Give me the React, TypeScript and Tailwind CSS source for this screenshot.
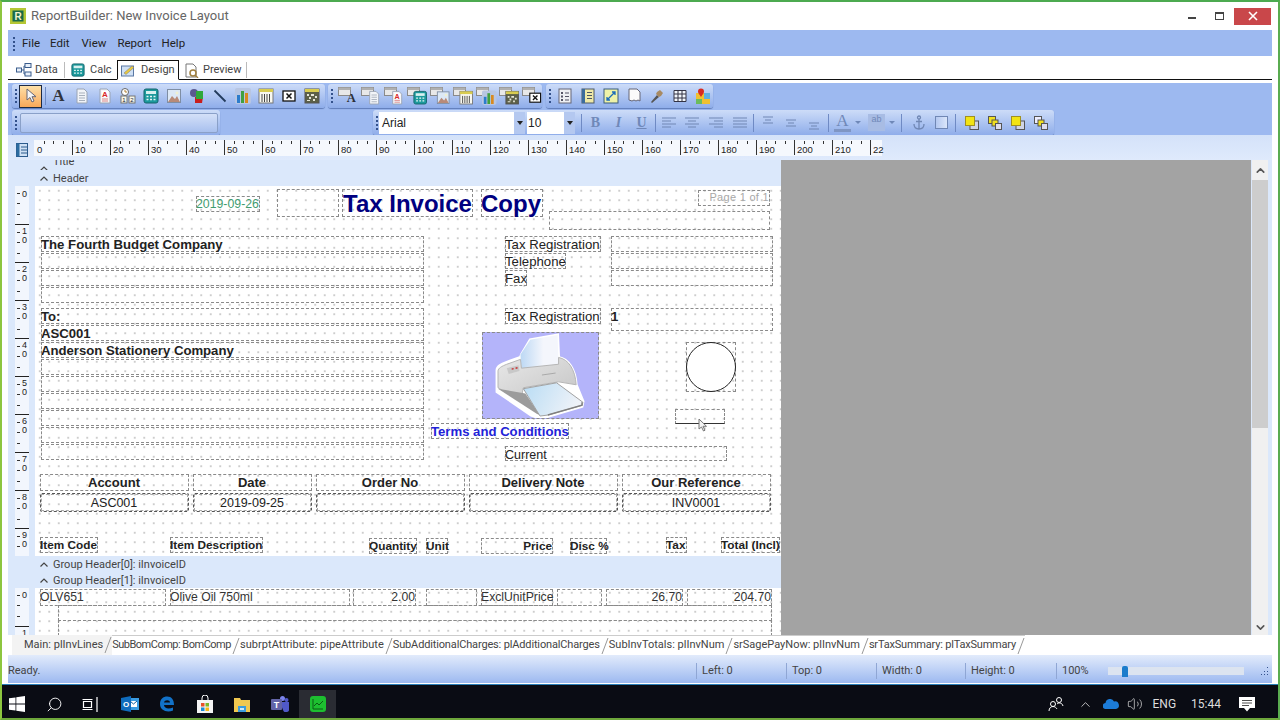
import type { ReactNode } from "react";
import { ChevronDown, ChevronUp, Search, Volume2 } from "lucide-react";

const arrow = "M1.5 5.5 5 2l3.5 3.5";

function Caret() {
  return (
    <svg width="10" height="7" viewBox="0 0 10 7" className="shrink-0">
      <path d={arrow} fill="none" stroke="#444" strokeWidth="1.2" />
    </svg>
  );
}

function Grip({ className = "" }: { className?: string }) {
  return (
    <div className={"flex flex-col gap-[2px] shrink-0 " + className}>
      <span className="w-[2px] h-[2px] bg-[#33518c]" />
      <span className="w-[2px] h-[2px] bg-[#33518c]" />
      <span className="w-[2px] h-[2px] bg-[#33518c]" />
      <span className="w-[2px] h-[2px] bg-[#33518c]" />
    </div>
  );
}

const page = (
  <>
    <path d="M3 1h7l3 3v11H3z" fill="#f2f4f8" stroke="#9aa4b4" />
    <path d="M5 5h6M5 7.500h6M5 10h6M5 12.500h6" stroke="#a8b0bc" />
  </>
);
const pageA = (
  <>
    <path d="M3 1h7l3 3v11H3z" fill="#f6f6f8" stroke="#9aa4b4" />
    <rect x="5" y="3" width="6" height="6" fill="#fff" />
    <text x="8" y="9" fontSize="8" fontWeight="700" textAnchor="middle" fill="#d82828" fontFamily="Liberation Sans">A</text>
    <path d="M5 11h6M5 13h6" stroke="#d88" />
  </>
);
const clock = (
  <>
    <circle cx="5" cy="4" r="3.500" fill="#fff" stroke="#666" />
    <path d="M5 2v2h2" stroke="#b08030" fill="none" />
    <rect x="1" y="8" width="6" height="7" fill="#f6f6e8" stroke="#777" />
    <rect x="9" y="8" width="6" height="7" fill="#f6f6e8" stroke="#777" />
    <text x="4" y="14" fontSize="6" textAnchor="middle" fill="#223" fontFamily="Liberation Sans">1</text>
    <text x="12" y="14" fontSize="6" textAnchor="middle" fill="#223" fontFamily="Liberation Sans">2</text>
  </>
);
const calc = (
  <>
    <rect x="1" y="1" width="14" height="14" rx="2" fill="#1c9a9c" stroke="#14646c" />
    <rect x="3" y="3" width="10" height="3" fill="#d8f0f0" />
    <path d="M3.500 8.500h2M7 8.500h2M10.500 8.500h2M3.500 11.500h2M7 11.500h2M10.500 11.500h2" stroke="#e8f6f6" strokeWidth="1.500" />
  </>
);
const photo = (
  <>
    <rect x="1.500" y="1.500" width="13" height="13" fill="#dce8f6" stroke="#7f8ea4" />
    <path d="M2 14l4-6 3 3 2-3 3 6z" fill="#b88a78" />
    <circle cx="11" cy="5" r="1.500" fill="#f0f0d0" />
  </>
);
const shapes = (
  <>
    <path d="M6 9h8l-1 6H6z" fill="#c81e1e" />
    <circle cx="5" cy="5" r="4" fill="#5a5a90" />
    <path d="M7 3h7v8H7z" fill="#2fa83a" />
  </>
);
const line = <path d="M2.500 2.500l11 11" stroke="#223a5c" strokeWidth="1.800" />;
const chart = (
  <>
    <rect x="0" y="0" width="16" height="16" rx="2" fill="#b8c6e2" />
    <path d="M2 15V7h3v8z" fill="#2c7ccc" />
    <path d="M6 15V3h3v12z" fill="#40a040" />
    <path d="M10 15V5h3v10z" fill="#d88a20" />
  </>
);
const bars = (
  <>
    <rect x="1" y="1" width="14" height="14" fill="#f8f8f0" stroke="#777" />
    <rect x="1" y="1" width="14" height="3" fill="#d8cc50" />
    <path d="M4 6v8M6.500 6v8M9 6v8M11.500 6v8" stroke="#444" />
  </>
);
const xbox = (
  <>
    <rect x="2" y="3" width="12" height="10" fill="#fff" stroke="#111" strokeWidth="1.300" />
    <path d="M5.500 5.500l5 5m0-5l-5 5" stroke="#111" strokeWidth="1.500" />
  </>
);
const qr = (
  <>
    <rect x="1" y="1" width="14" height="14" fill="#5c6048" stroke="#555" />
    <rect x="1" y="1" width="14" height="3" fill="#d8cc50" />
    <path d="M3 6h2v2H3zM7 6h3v2H7zM11 8h2v2h-2zM5 9h2v2H5zM3 12h3v1H3zM9 11h2v2H9z" fill="#e6e6d8" />
  </>
);
const aLetter = (
  <text x="8" y="13" fontSize="14" fontWeight="700" textAnchor="middle" fill="#2c3038" fontFamily="Liberation Serif">A</text>
);
const list = (
  <>
    <rect x="2" y="1" width="12" height="14" fill="#eef0f4" stroke="#667" />
    <path d="M4 4h2v2H4zM4 7.500h2v2H4zM4 11h2v2H4z" fill="#556" />
    <path d="M8 5h4M8 8.500h4M8 12h4" stroke="#556" />
  </>
);
const outline = (
  <>
    <rect x="2" y="1" width="12" height="14" fill="#efe9a8" stroke="#4c5864" />
    <rect x="2" y="1" width="3" height="14" fill="#3c6c9c" />
    <path d="M7 4.500h5M7 7.500h5M7 10.500h5" stroke="#4c5864" />
  </>
);
const fit = (
  <>
    <rect x="1" y="1" width="14" height="14" fill="#eef2a8" stroke="#3a5c7c" />
    <path d="M4 12l8-8M9 4h3v3M4 9v3h3" stroke="#1c6cb8" fill="none" strokeWidth="1.300" />
  </>
);
const torn = (
  <path d="M3 1h8l3 3v9l-2-1-2 1-2-1-2 1-3-1z" fill="#fbfbfb" stroke="#667" />
);
const torch = (
  <>
    <path d="M2 14l6-7 2 2-7 6z" fill="#555" />
    <path d="M8 4l3-2 3 3-2 3-2 1-3-3z" fill="#a88a62" />
  </>
);
const grid = (
  <path d="M2 2.500h12v11H2zM6 2.500v11M10 2.500v11M2 6h12M2 10h12" fill="#f2f6fc" stroke="#334" />
);
const pin = (
  <>
    <rect x="1" y="5" width="14" height="11" fill="#f0c030" />
    <path d="M9 5h6v6H9z" fill="#60b0e0" />
    <path d="M1 11h6v5H1z" fill="#6cbc5c" />
    <path d="M6 9C4 6 3 5 3 3.500a3 3 0 016 0C9 5 8 6 6 9z" fill="#d82a20" />
  </>
);

function Ico({ children, size = 16 }: { children: ReactNode; size?: number }) {
  return (
    <svg width={size} height={size} viewBox="0 0 16 16">
      {children}
    </svg>
  );
}

function Stacked({ children }: { children: ReactNode }) {
  return (
    <svg width="21" height="18" viewBox="0 0 21 18">
      <rect x="0.500" y="0.500" width="12" height="8" fill="#e8e8e8" stroke="#8a8a8a" />
      <rect x="0.500" y="0.500" width="12" height="2.500" fill="#b0b0b0" />
      <g transform="translate(6 3.500) scale(0.9)">{children}</g>
    </svg>
  );
}

function Slot({ children, className = "" }: { children?: ReactNode; className?: string }) {
  return <div className={"w-[23px] h-[22px] flex items-center justify-center shrink-0 " + className}>{children}</div>;
}

function Bar({ children, className = "" }: { children: ReactNode; className?: string }) {
  return (
    <div className={"h-full flex items-center rounded-[3px] shadow-[0_1px_1px_#5f7cb8] bg-gradient-to-b from-[#cddcf8] to-[#8fadea] " + className}>
      {children}
    </div>
  );
}

function Sep({ className = "mx-[3px]" }: { className?: string }) {
  return <span className={"w-px h-[18px] bg-[#6f8ac4] shrink-0 " + className} />;
}

function Align({ rows }: { rows: string }) {
  return (
    <svg width="16" height="16" viewBox="0 0 16 16">
      <path d={rows} stroke="#7087b4" strokeWidth="1" fill="none" />
    </svg>
  );
}

function Layer({ flip, grey }: { flip?: boolean; grey?: boolean }) {
  return (
    <svg width="16" height="16" viewBox="0 0 16 16">
      {flip ? (
        <>
          <rect x="1.500" y="1.500" width="7" height="7" fill={grey ? "#eef" : "#f0e020"} stroke="#555" />
          <rect x="5" y="5" width="6" height="6" fill="#f0e020" stroke="#555" />
          <rect x="8.500" y="8.500" width="6" height="6" fill="#dde" stroke="#555" />
        </>
      ) : (
        <>
          <rect x="6" y="6" width="8.500" height="8.500" fill="#cfd4e6" stroke="#555" />
          <rect x="1.500" y="1.500" width="9" height="9" fill="#f2e414" stroke="#a09020" />
        </>
      )}
    </svg>
  );
}

function Row1() {
  return (
    <div className="h-[24px] flex items-center pl-[4px] gap-[3px]">
      <Bar className="w-[313px] pl-[3px]">
        <Grip className="mr-[2px]" />
        <div className="w-[23px] h-[23px] border border-[#1c2a44] bg-gradient-to-b from-[#fde0a8] to-[#f8a858] flex items-center justify-center shrink-0">
          <svg width="14" height="16" viewBox="0 0 14 16">
            <path d="M3 1v11l3-2.500 2 4.500 2-1-2-4.300h4z" fill="#f6f6f6" stroke="#667" />
          </svg>
        </div>
        <Sep />
        <Slot className="-ml-[2px]">
          <span className="font-['Liberation_Serif'] font-bold text-[17px] text-[#30343c]">A</span>
        </Slot>
        <Slot><Ico>{page}</Ico></Slot>
        <Slot><Ico>{pageA}</Ico></Slot>
        <Slot><Ico>{clock}</Ico></Slot>
        <Slot><Ico>{calc}</Ico></Slot>
        <Slot><Ico>{photo}</Ico></Slot>
        <Slot><Ico>{shapes}</Ico></Slot>
        <Slot><Ico>{line}</Ico></Slot>
        <Slot><Ico>{chart}</Ico></Slot>
        <Slot><Ico>{bars}</Ico></Slot>
        <Slot><Ico>{xbox}</Ico></Slot>
        <Slot><Ico>{qr}</Ico></Slot>
      </Bar>
      <Bar className="w-[214px] pl-[3px]">
        <Grip className="mr-[4px]" />
        <Slot><Stacked>{aLetter}</Stacked></Slot>
        <Slot><Stacked>{page}</Stacked></Slot>
        <Slot><Stacked>{pageA}</Stacked></Slot>
        <Slot><Stacked>{calc}</Stacked></Slot>
        <Slot><Stacked>{photo}</Stacked></Slot>
        <Slot><Stacked>{bars}</Stacked></Slot>
        <Slot><Stacked>{chart}</Stacked></Slot>
        <Slot><Stacked>{qr}</Stacked></Slot>
        <Slot><Stacked>{xbox}</Stacked></Slot>
      </Bar>
      <Bar className="w-[167px] pl-[3px] ml-[1px]">
        <Grip className="mr-[2px]" />
        <Slot><Ico>{list}</Ico></Slot>
        <Slot><Ico>{outline}</Ico></Slot>
        <Slot><Ico>{fit}</Ico></Slot>
        <Slot><Ico>{torn}</Ico></Slot>
        <Slot><Ico>{torch}</Ico></Slot>
        <Slot><Ico>{grid}</Ico></Slot>
        <Slot><Ico>{pin}</Ico></Slot>
      </Bar>
    </div>
  );
}

function Row2() {
  return (
    <div className="h-[25px] mt-[2px] flex items-center pl-[4px]">
      <Bar className="w-[208px] pl-[3px]">
        <Grip className="mr-[3px]" />
        <div className="w-[198px] h-[20px] border border-[#8aa0c8] rounded-[2px] bg-gradient-to-b from-[#d4e0f8] to-[#a8c0ee]" />
      </Bar>
      <Bar className="w-[681px] ml-[153px] pl-[3px]">
        <Grip className="mr-[1px]" />
        <div className="w-[146px] h-[22px] bg-white flex items-center pl-[3px] shrink-0">
          <span className="font-['Liberation_Sans'] text-[12px] text-[#222]">Arial</span>
          <span className="ml-auto w-[11px] h-[22px] bg-[#b4c8f0] flex items-center justify-center">
            <span className="border-x-[3px] border-x-transparent border-t-[4px] border-t-[#222]" />
          </span>
        </div>
        <div className="w-[48px] h-[22px] bg-white flex items-center pl-[1px] ml-[2px] shrink-0">
          <span className="font-['Liberation_Sans'] text-[12px] text-[#222]">10</span>
          <span className="ml-auto w-[11px] h-[22px] bg-[#b4c8f0] flex items-center justify-center">
            <span className="border-x-[3px] border-x-transparent border-t-[4px] border-t-[#222]" />
          </span>
        </div>
        <Sep className="ml-[6px] mr-[3px]" />
        <Slot className="-ml-[1px]"><span className="font-['Liberation_Serif'] font-bold text-[14px] text-[#6f88b8]">B</span></Slot>
        <Slot><span className="font-['Liberation_Serif'] italic font-bold text-[14px] text-[#6f88b8]">I</span></Slot>
        <Slot><span className="font-['Liberation_Serif'] underline font-bold text-[14px] text-[#6f88b8]">U</span></Slot>
        <Sep className="mx-[2px]" />
        <Slot className="-ml-[1px]"><Align rows="M1 3h14M1 6h9M1 9h14M1 12h9" /></Slot>
        <Slot className="w-[24px]"><Align rows="M1 3h14M4 6h8M1 9h14M4 12h8" /></Slot>
        <Slot className="w-[24px]"><Align rows="M1 3h14M6 6h9M1 9h14M6 12h9" /></Slot>
        <Slot className="w-[21px]"><Align rows="M1 3h14M1 6h14M1 9h14M1 12h14" /></Slot>
        <Sep className="mx-[2px]" />
        <Slot><Align rows="M3 2h10M5 5h6M3 8h10" /></Slot>
        <Slot><Align rows="M3 5h10M5 8h6M3 11h10" /></Slot>
        <Slot><Align rows="M3 8h10M5 11h6M3 14h10" /></Slot>
        <Sep className="ml-[3px] mr-[2px]" />
        <Slot>
          <span className="font-['Liberation_Serif'] text-[17px] leading-[16px] text-[#6f88b8] border-b-[3px] border-[#7f96c4] px-[2px]">A</span>
        </Slot>
        <span className="border-x-[3px] border-x-transparent border-t-[3px] border-t-[#6f88b8] mx-[1px]" />
        <Slot className="ml-[3px]">
          <span className="w-[17px] h-[17px] bg-[#a8bce4] text-[9px] text-[#6f88b8] text-center font-['Liberation_Sans'] leading-[10px]">ab</span>
        </Slot>
        <span className="border-x-[3px] border-x-transparent border-t-[3px] border-t-[#6f88b8] mx-[1px]" />
        <Sep className="ml-[5px] mr-[3px]" />
        <Slot className="ml-[2px]">
          <svg width="14" height="16" viewBox="0 0 14 16" fill="none" stroke="#7087b4" strokeWidth="1.300">
            <circle cx="7" cy="2.500" r="1.500" />
            <path d="M7 4v10M2 9c0 3 2 5 5 5s5-2 5-5M4 6.500h6" />
          </svg>
        </Slot>
        <Slot><span className="w-[13px] h-[13px] border border-[#7087b4] bg-gradient-to-r from-[#b4c8f0] to-[#dbe6fa]" /></Slot>
        <Sep className="mx-[2px]" />
        <Slot className="ml-[2px]"><Layer /></Slot>
        <Slot><Layer flip /></Slot>
        <Slot><Layer /></Slot>
        <Slot><Layer flip grey /></Slot>
      </Bar>
    </div>
  );
}

const hLabels = ["0", "10", "20", "30", "40", "50", "60", "70", "80", "90", "100", "110", "120", "130", "140", "150", "160", "170", "180", "190", "200", "210", "22"];

function HRuler() {
  return (
    <div className="h-[25px] flex items-start bg-gradient-to-b from-[#d4e2f9] to-[#dfeafc] shrink-0">
      <div className="w-[26px] pl-[8px] pt-[8px] shrink-0">
        <svg width="12" height="14" viewBox="0 0 12 14">
          <rect x="0.500" y="0.500" width="11" height="13" fill="#cfe0f4" stroke="#2c5a8c" />
          <rect x="0.500" y="0.500" width="3" height="13" fill="#2c6ca0" />
          <path d="M5 4h6M5 7h6M5 10h6" stroke="#2c5a8c" />
        </svg>
      </div>
      <div className="flex h-[16px] mt-[5px] bg-[#f5f8fd]">
        {hLabels.map((l, i) => (
          <div key={l} className={"relative h-[16px] shrink-0 font-['Liberation_Sans'] text-[9.500px] text-[#222] pl-[3px] pt-[4px] leading-[11px] " + (i === 22 ? "w-[12px]" : "w-[38px]")}>
            {i > 0 && <span className="absolute left-0 top-0 h-[15px] w-px bg-[#333]" />}
            {i < 22 && (
              <>
                <span className="absolute left-[10px] top-[1px] h-[3px] w-px bg-[#333]" />
                <span className="absolute left-[19px] top-[1px] h-[3px] w-px bg-[#333]" />
                <span className="absolute left-[29px] top-[1px] h-[3px] w-px bg-[#333]" />
              </>
            )}
            {l}
          </div>
        ))}
      </div>
    </div>
  );
}

function VCell({ tens, first }: { tens?: string; first?: boolean }) {
  return (
    <div className={"relative h-[38px] shrink-0 font-['Liberation_Sans'] text-[9px] leading-[9px] text-[#222] " + (first ? "" : "border-t border-[#222]")}>
      <span className="absolute left-[2px] top-[7px] w-[3px] h-px bg-[#333]" />
      <span className="absolute left-[2px] top-[17px] w-[3px] h-px bg-[#333]" />
      <span className="absolute left-[2px] top-[28px] w-[3px] h-px bg-[#333]" />
      {tens ? <span className="absolute left-[7px] top-[2px]">{tens}</span> : null}
      <span className={"absolute left-[7px] " + (tens ? "top-[11px]" : "top-[4px]")}>0</span>
    </div>
  );
}

function VRuler({ children }: { children: ReactNode }) {
  return (
    <div className="w-[27px] shrink-0 pl-[7px] bg-[#dbe8fb] overflow-hidden">
      <div className="w-[14px] h-full bg-[#f2f6fd] overflow-hidden">{children}</div>
    </div>
  );
}

function D({ className, children }: { className: string; children?: ReactNode }) {
  return <div className={"absolute border border-dashed border-[#8a8a8a] whitespace-nowrap indent-[-1px] " + className}>{children}</div>;
}

function Printer() {
  return (
    <svg width="115" height="85" viewBox="0 0 117 87" className="block">
      <defs>
        <linearGradient id="paper" x1="0" x2="1" y1="0" y2="0">
          <stop offset="0" stopColor="#bcd8f4" />
          <stop offset="0.600" stopColor="#f4f6fc" />
        </linearGradient>
        <linearGradient id="tray" x1="0" x2="1" y1="0" y2="0.300">
          <stop offset="0" stopColor="#b8dcf4" />
          <stop offset="1" stopColor="#eef2f8" />
        </linearGradient>
        <linearGradient id="body" x1="0" x2="1" y1="0" y2="1">
          <stop offset="0" stopColor="#e8e8e8" />
          <stop offset="1" stopColor="#c4c4c4" />
        </linearGradient>
      </defs>
      <path d="M14 38c0-4 5-6 10-8l14-5 1-3 9-15 28-5 1 23c10 2 17 12 18 28l7 17-1 5-37 11-7 1-8-3-35-24z" fill="#fff" stroke="#fff" strokeWidth="3" />
      <path d="M38 22l10-15 28-5 1 31-38 5z" fill="url(#paper)" />
      <path d="M15 39c0-3 4-5 9-7l14-5 1 9 38-4V25c10 2 17 12 18 28l-18-3-36 6-3 14-23-14z" fill="url(#body)" stroke="#b4b4b4" />
      <path d="M15 57l23 15 17 11 3 1-15-22z" fill="#9c9c9c" />
      <path d="M41 57l34-6 27 20-1 3-35 10-8 1z" fill="url(#tray)" stroke="#a0a0a0" />
      <path d="M66 84l35-10v-3" fill="none" stroke="#808080" strokeWidth="1.500" />
      <path d="M24 36l12-3 1 6-11 3z" fill="#c8c8c8" />
      <path d="M29 37l2-.5M33 36l2-.5" stroke="#c83030" strokeWidth="1.500" />
      <path d="M60 43l14-2" stroke="#a8a8a8" />
    </svg>
  );
}

const topCols = [
  ["left-[5px] w-[149px]", "Account", "ASC001"],
  ["left-[158px] w-[119px]", "Date", "2019-09-25"],
  ["left-[281px] w-[149px]", "Order No", ""],
  ["left-[434px] w-[149px]", "Delivery Note", ""],
  ["left-[587px] w-[149px]", "Our Reference", "INV0001"],
];

const addrRows = [
  "top-[50px]",
  "top-[67px]",
  "top-[84px]",
  "top-[101px]",
  "top-[122px]",
  "top-[139px]",
  "top-[156px]",
  "top-[173px]",
  "top-[190px]",
  "top-[207px]",
  "top-[224px]",
  "top-[241px]",
  "top-[258px]",
];

const dots = "bg-white bg-[radial-gradient(#cdcdcd_0.7px,transparent_0.9px)] bg-[size:9.5px_9.5px]";

function HeaderBand() {
  return (
    <div className="h-[370px] flex shrink-0">
      <VRuler>
        <VCell first />
        {["1", "2", "3", "4", "5", "6", "7", "8", "9"].map((t) => (
          <VCell key={t} tens={t} />
        ))}
      </VRuler>
      <div className={"relative w-[746px] overflow-hidden font-['Liberation_Sans'] text-[#222] " + dots}>
        <D className="left-[161px] top-[10px] w-[64px] h-[16px] text-[12.300px] leading-[15px] text-[#3f9c70]">2019-09-26</D>
        <D className="left-[242px] top-[3px] w-[62px] h-[28px]" />
        <D className="left-[307px] top-[3px] w-[131px] h-[28px] pl-px text-[24px] leading-[28px] font-bold text-[#000080]">Tax Invoice</D>
        <D className="left-[446px] top-[3px] w-[62px] h-[28px] text-[24px] leading-[28px] font-bold text-[#000080]">Copy</D>
        <D className="left-[663px] top-[4px] w-[72px] h-[16px] text-[11px] leading-[12px] text-right text-[#a8a8a8] tracking-[0.3px] overflow-hidden">Page 1 of 1</D>
        <D className="left-[514px] top-[25px] w-[221px] h-[19px]" />

        {addrRows.map((t) => (
          <D key={t} className={"left-[6px] w-[383px] h-[16px] " + t} />
        ))}
        <div className="absolute left-[6px] top-[50px] text-[13.200px] leading-[17px] font-bold">The Fourth Budget Company</div>
        <div className="absolute left-[6px] top-[122px] text-[13.150px] leading-[17px] font-bold">
          <div>To:</div>
          <div>ASC001</div>
          <div>Anderson Stationery Company</div>
        </div>

        <D className="left-[470px] top-[50px] w-[96px] h-[16px] text-[13.200px] leading-[15px]">Tax Registration</D>
        <D className="left-[470px] top-[67px] w-[61px] h-[16px] text-[13.200px] leading-[15px]">Telephone</D>
        <D className="left-[470px] top-[84px] w-[22px] h-[16px] text-[13.200px] leading-[15px]">Fax</D>
        <D className="left-[576px] top-[50px] w-[162px] h-[16px]" />
        <D className="left-[576px] top-[67px] w-[162px] h-[16px]" />
        <D className="left-[576px] top-[84px] w-[162px] h-[16px]" />
        <D className="left-[470px] top-[122px] w-[96px] h-[16px] text-[13.200px] leading-[15px]">Tax Registration</D>
        <D className="left-[576px] top-[122px] w-[162px] h-[23px] text-[13.200px] leading-[16px] font-bold">1</D>

        <D className="left-[447px] top-[146px] w-[117px] h-[87px] bg-[#b4b4fa]">
          <Printer />
        </D>
        <D className="left-[651px] top-[156px] w-[50px] h-[50px]">
          <div className="-m-px w-[50px] h-[50px] rounded-full bg-white border border-[#222]" />
        </D>
        <D className="left-[640px] top-[223px] w-[50px] h-[15px] border-b-[#333]! [border-bottom-style:solid]" />
        <svg width="11" height="14" viewBox="0 0 11 14" className="absolute left-[663px] top-[232px]">
          <path d="M1 1v10l2.500-2 2 4 1.500-.8-2-3.900h3.500z" fill="#f4f4f4" stroke="#777" />
        </svg>
        <D className="left-[396px] top-[237px] w-[138px] h-[16px] text-[13.150px] leading-[15px] font-bold text-[#2222d8]">Terms and Conditions</D>
        <D className="left-[470px] top-[260px] w-[222px] h-[15px] text-[12.500px] leading-[16px]">Current</D>

        {topCols.map(([pos, head, val]) => (
          <div key={head}>
            <D className={"top-[288px] h-[17px] text-[13px] leading-[15px] font-bold text-center " + pos}>{head}</D>
            <D className={"top-[307px] h-[19px] rounded-[2px] border-[#555]! text-[12.500px] text-center " + pos}>
              <div className="h-full border border-dashed border-[#aaa] leading-[16px]">{val}</div>
            </D>
          </div>
        ))}

        <div className="text-[11.800px] font-bold underline leading-[14px]">
          <D className="left-[5px] top-[351px] w-[58px] h-[16px]">Item Code</D>
          <D className="left-[135px] top-[351px] w-[93px] h-[16px]">Item Description</D>
          <D className="left-[334px] top-[352px] w-[48px] h-[16px]">Quantity</D>
          <D className="left-[391px] top-[352px] w-[22px] h-[16px]">Unit</D>
          <D className="left-[446px] top-[352px] w-[72px] h-[16px] text-right">Price</D>
          <D className="left-[535px] top-[352px] w-[37px] h-[16px]">Disc %</D>
          <D className="left-[631px] top-[351px] w-[21px] h-[16px]">Tax</D>
          <D className="left-[686px] top-[351px] w-[59px] h-[16px]">Total (Incl)</D>
        </div>
      </div>
    </div>
  );
}

function BandLabel({ text, className = "h-[16px]" }: { text: string; className?: string }) {
  return (
    <div className={"flex items-center gap-[4px] pl-[31px] pt-px bg-[#dbe8fb] text-[11px] text-[#444] shrink-0 " + className}>
      <Caret />
      <span className="leading-[15px]">{text}</span>
    </div>
  );
}

function DetailBand() {
  return (
    <div className="flex-1 flex min-h-0">
      <VRuler>
        <div className="relative h-[38px] font-['Liberation_Sans'] text-[9px] leading-[9px] text-[#222]">
          <span className="absolute left-[2px] top-[7px] w-[3px] h-px bg-[#333]" />
          <span className="absolute left-[2px] top-[17px] w-[3px] h-px bg-[#333]" />
          <span className="absolute left-[2px] top-[28px] w-[3px] h-px bg-[#333]" />
          <span className="absolute left-[7px] top-[3px]">0</span>
        </div>
        <div className="h-px bg-[#222]" />
        <div className="pl-[7px] pt-[2px] text-[9px] leading-[9px] font-['Liberation_Sans'] text-[#222]">1</div>
      </VRuler>
      <div className={"relative w-[746px] overflow-hidden font-['Liberation_Sans'] text-[12.200px] leading-[15px] text-[#333] " + dots}>
        <D className="left-[5px] top-[1px] w-[126px] h-[17px]">OLV651</D>
        <D className="left-[135px] top-[1px] w-[180px] h-[17px]">Olive Oil 750ml</D>
        <D className="left-[318px] top-[1px] w-[63px] h-[17px] text-right">2.00</D>
        <D className="left-[391px] top-[1px] w-[51px] h-[17px]" />
        <D className="left-[446px] top-[1px] w-[72px] h-[17px]">ExclUnitPrice</D>
        <D className="left-[522px] top-[1px] w-[45px] h-[17px]" />
        <D className="left-[571px] top-[1px] w-[77px] h-[17px] text-right">26.70</D>
        <D className="left-[652px] top-[1px] w-[85px] h-[17px] text-right">204.70</D>
        <D className="left-[23px] top-[17px] w-[714px] h-[16px]" />
        <D className="left-[23px] top-[32px] w-[714px] h-[16px]" />
      </div>
    </div>
  );
}

function Scrollbar() {
  return (
    <div className="w-[16px] shrink-0 ml-px flex flex-col bg-[#f0f0f0]">
      <div className="h-[20px] flex items-center justify-center">
        <ChevronUp size={13} strokeWidth={3} className="text-[#555]" />
      </div>
      <div className="h-[248px] bg-[#cdcdcd]" />
      <div className="flex-1" />
      <div className="h-[16px] flex items-center justify-center">
        <ChevronDown size={13} strokeWidth={3} className="text-[#555]" />
      </div>
    </div>
  );
}

const pages = [
  ["Main: plInvLines", ""],
  ["SubBomComp: BomComp", "tracking-[-0.5px]"],
  ["subrptAttribute: pipeAttribute", "tracking-[0.05px]"],
  ["SubAdditionalCharges: plAdditionalCharges", "tracking-[-0.15px]"],
  ["SubInvTotals: plInvNum", ""],
  ["srSagePayNow: plInvNum", ""],
  ["srTaxSummary: plTaxSummary", "tracking-[-0.2px]"],
];

function PageTabs() {
  return (
    <div className="h-[20px] flex items-start bg-white pl-[4px] text-[11px] text-[#444] overflow-hidden shrink-0">
      {pages.map(([p, track], i) => (
        <div key={p} className={"flex items-center h-[20px] " + (i === 0 ? "pl-[12px] bg-[#f3f3f3]" : "border-t border-[#ccc]")}>
          <span className={"whitespace-nowrap " + track}>{p}</span>
          <svg width="9" height="20" viewBox="0 0 9 20" className="shrink-0">
            <path d="M8 2 2 18" stroke="#999" fill="none" />
          </svg>
        </div>
      ))}
    </div>
  );
}

function StatusCell({ text, className }: { text: string; className: string }) {
  return (
    <div className={"h-[16px] border-l border-[#8fa6d4] pl-[5px] leading-[16px] shrink-0 " + className}>{text}</div>
  );
}

function StatusBar() {
  return (
    <div className="h-[28px] flex items-center pt-[4px] bg-gradient-to-b from-[#e2ebfb] to-[#9db9f0] text-[11px] text-[#444] shrink-0">
      <div className="w-[688px]">Ready.</div>
      <StatusCell text="Left: 0" className="w-[90px]" />
      <StatusCell text="Top: 0" className="w-[90px]" />
      <StatusCell text="Width: 0" className="w-[89px]" />
      <StatusCell text="Height: 0" className="w-[91px]" />
      <StatusCell text="100%" className="w-[52px]" />
      <div className="w-[136px] h-[8px] bg-[#dce4f0] flex items-center pl-[14px]">
        <span className="w-[6px] h-[11px] bg-[#1c7ccc] rounded-t-[2px]" />
      </div>
      <svg width="10" height="10" viewBox="0 0 10 10" className="ml-[15px]">
        <path d="M8 1h1v1H8zM5 5h1v1H5zM8 5h1v1H8zM2 8h1v1H2zM5 8h1v1H5zM8 8h1v1H8z" fill="#33518c" />
      </svg>
    </div>
  );
}

function TaskIcon({ children, active }: { children: ReactNode; active?: boolean }) {
  return (
    <div className={"w-[37.6px] h-[28px] flex items-center justify-center shrink-0 " + (active ? "bg-[#2a2c33]" : "")}>
      {children}
    </div>
  );
}

function Taskbar() {
  return (
    <div className="h-[33px] flex items-end -ml-[1px] bg-[#0a0c14] shrink-0">
      <div className="flex items-end -ml-[3px]">
        <TaskIcon>
          <svg width="16" height="16" viewBox="0 0 16 16" fill="#fff">
            <path d="M0 2.300 6.500 1.400v6.200H0zM7.300 1.300 16 0v7.600H7.300zM0 8.400h6.500v6.200L0 13.700zM7.300 8.400H16V16l-8.700-1.300z" />
          </svg>
        </TaskIcon>
        <TaskIcon>
          <Search size={17} strokeWidth={1.3} className="text-white -scale-x-100" />
        </TaskIcon>
        <TaskIcon>
          <svg width="17" height="15" viewBox="0 0 17 15" fill="none" stroke="#fff" className="-ml-[3px]">
            <path d="M.5 2.500h10M.5 12.500h10M1.500 4.500h8v6h-8zM15 0v15" strokeWidth="1.200" />
          </svg>
        </TaskIcon>
        <TaskIcon>
          <svg width="18" height="16" viewBox="0 0 18 16">
            <rect x="7" y="2" width="11" height="12" fill="#3a9be0" />
            <path d="M9 5h7v6H9z" fill="#fff" />
            <path d="M9 5l3.500 3L16 5" fill="none" stroke="#0f5a9c" />
            <path d="M0 2l10-2v16L0 14z" fill="#0f6cbd" />
            <text x="5" y="11" fontSize="8" fontWeight="700" textAnchor="middle" fill="#fff" fontFamily="Liberation Sans">O</text>
          </svg>
        </TaskIcon>
        <TaskIcon>
          <svg width="16" height="16" viewBox="0 0 16 16">
            <path d="M1 8C1 3 4 .5 8.300.5 12.500.5 15 3.500 15 9H5c.2 3.500 4.500 4.500 9 2.500v3C8 17 1 14.500 1 8zm4-1.500h6C11 3.500 5.500 3.500 5 6.500z" fill="#1272c8" />
          </svg>
        </TaskIcon>
        <TaskIcon>
          <svg width="16" height="18" viewBox="0 0 16 18">
            <path d="M5 5V3a3 3 0 016 0v2" fill="none" stroke="#fff" />
            <rect x="0" y="5" width="16" height="13" fill="#f4f4f4" />
            <rect x="4" y="8" width="3.500" height="3.500" fill="#e8502a" />
            <rect x="8.500" y="8" width="3.500" height="3.500" fill="#7cb82a" />
            <rect x="4" y="12.500" width="3.500" height="3.500" fill="#1c8cd8" />
            <rect x="8.500" y="12.500" width="3.500" height="3.500" fill="#f8b818" />
          </svg>
        </TaskIcon>
        <TaskIcon>
          <svg width="16" height="15" viewBox="0 0 16 15">
            <path d="M0 1h6l1 2h9v12H0z" fill="#f0c850" />
            <rect x="4" y="9" width="8" height="6" fill="#3c9cdc" />
            <rect x="6" y="11" width="4" height="2" fill="#cce8f8" />
          </svg>
        </TaskIcon>
        <TaskIcon>
          <svg width="18" height="16" viewBox="0 0 18 16">
            <circle cx="11.500" cy="2.500" r="2.500" fill="#7b83eb" />
            <circle cx="15.500" cy="4" r="2" fill="#5059c9" />
            <path d="M9 6h9v6a3 3 0 01-6 2z" fill="#5059c9" />
            <rect x="0" y="3" width="11" height="11" rx="1" fill="#6264a7" />
            <text x="5.500" y="12" fontSize="9" fontWeight="700" textAnchor="middle" fill="#fff" fontFamily="Liberation Sans">T</text>
          </svg>
        </TaskIcon>
        <TaskIcon active>
          <svg width="16" height="16" viewBox="0 0 16 16">
            <rect width="16" height="16" rx="3" fill="#1dbf30" />
            <path d="M3 3v10h10" fill="none" stroke="#0a5c14" />
            <path d="M4 10l3-3 2 2 4-4" fill="none" stroke="#0a5c14" />
          </svg>
        </TaskIcon>
      </div>
      <div className="ml-auto h-[28px] flex items-center text-white">
        <svg width="16" height="16" viewBox="0 0 16 16" fill="none" stroke="#fff" className="mr-[14px]">
          <circle cx="5" cy="8" r="2.500" />
          <circle cx="11" cy="4" r="2.500" />
          <path d="M1 15c0-3 2-4.500 4-4.500S8.500 12 9 13M9 8c1-1 2-1 3-1s2.500 1 3 3" />
        </svg>
        <ChevronUp size={15} strokeWidth={1.3} className="mr-[10px] text-[#ddd]" />
        <svg width="16" height="10" viewBox="0 0 16 10" className="mr-[8px]">
          <path d="M3 10a3 3 0 01-.5-6A4.500 4.500 0 0111 2.500 3.800 3.800 0 0113 10z" fill="#1c7cd8" />
        </svg>
        <Volume2 size={16} strokeWidth={1.1} className="mr-[10px] text-[#ddd]" />
        <span className="text-[12px] mr-[15px] text-[#ddd]">ENG</span>
        <span className="text-[12px] mr-[18px] text-[#ddd]">15:44</span>
        <svg width="16" height="15" viewBox="0 0 16 15" className="mr-[23px]">
          <path d="M0 0h16v11h-5l-3 3.500L5 11H0z" fill="#fff" />
          <path d="M3 3.500h10M3 6h10M3 8.500h7" stroke="#222" strokeWidth="0.800" />
        </svg>
      </div>
    </div>
  );
}

export default function App() {
  return (
    <div className="w-[1280px] h-[720px] flex flex-col overflow-hidden bg-white font-['Roboto',sans-serif] border-t-2 border-t-[#4caa50] border-l-2 border-l-[#8dc63f] border-r-2 border-r-[#5aac50] border-b-2 border-b-[#6ea83c]">
      <div className="h-[28px] flex items-center pl-[8px] shrink-0">
        <svg width="16" height="16" viewBox="0 0 16 16">
          <rect width="16" height="16" fill="#b5c734" />
          <rect x="2.500" y="2.500" width="11" height="11" fill="#1a6a4a" />
          <text x="8" y="12" fontSize="10" fontWeight="700" textAnchor="middle" fill="#f4f4d0" fontFamily="Liberation Sans">R</text>
        </svg>
        <span className="ml-[5px] text-[13px] text-[#666]">ReportBuilder: New Invoice Layout</span>
        <div className="ml-auto flex items-center pr-[6px]">
          <span className="w-[8px] h-[2px] bg-[#444] mr-[19px] mt-[3px]" />
          <span className="w-[9px] h-[8px] border border-t-2 border-[#444]" />
          <div className="w-[37px] h-[17px] mr-[1px] ml-[10px] bg-[#c9474a] flex items-center justify-center">
            <svg width="10" height="10" viewBox="0 0 10 10">
              <path d="M1 1l8 8m0-8L1 9" stroke="#fff" strokeWidth="1.600" />
            </svg>
          </div>
        </div>
      </div>

      <div className="mx-[6px] flex flex-col shrink-0 h-[653px]">
        <div className="h-[26px] flex items-center bg-[#9db9f0] pl-[5px] pt-px text-[11.500px] text-[#222] shrink-0">
          <Grip className="mr-[7px]" />
          <span>File</span>
          <span className="ml-[10px]">Edit</span>
          <span className="ml-[12px]">View</span>
          <span className="ml-[11px]">Report</span>
          <span className="ml-[10px]">Help</span>
        </div>

        <div className="h-[23px] mt-px flex items-end bg-white border-b border-[#111] pl-[8px] text-[11px] text-[#444] shrink-0">
          <div className="flex items-center gap-[3px] w-[49px] h-[16px] border-r border-[#bbb] mb-[1px]">
            <svg width="16" height="14" viewBox="0 0 16 14" fill="#e8f0fa" stroke="#3a5c8c">
              <rect x="0.500" y="5" width="5" height="4" />
              <rect x="9" y="0.500" width="6" height="4" />
              <rect x="9" y="9" width="6" height="4" />
              <path d="M6 7h2M8 3v8h1M8 3h1" fill="none" />
            </svg>
            Data
          </div>
          <div className="flex items-center gap-[5px] w-[52px] h-[16px] pl-[6px] mb-[1px]">
            <Ico size={14}>{calc}</Ico>
            Calc
          </div>
          <div className="flex items-center gap-[4px] h-[20px] -mb-px pt-px px-[3px] w-[62px] border border-b-white border-[#111] bg-white">
            <svg width="16" height="14" viewBox="0 0 16 14">
              <rect x="0.500" y="2" width="12" height="10" fill="#cfe0f4" stroke="#5a78a4" />
              <path d="M3 9l8-7 2 1.500-8 7z" fill="#e8c840" stroke="#777" strokeWidth="0.500" />
            </svg>
            Design
          </div>
          <div className="flex items-center gap-[4px] w-[68px] h-[16px] pl-[5px] border-r border-[#bbb] mb-[1px]">
            <svg width="15" height="15" viewBox="0 0 15 15">
              <path d="M2 1h7l3 3v10H2z" fill="#fff" stroke="#777" />
              <circle cx="9" cy="10" r="3" fill="none" stroke="#a08040" strokeWidth="1.500" />
              <path d="M11 12l3 3" stroke="#a08040" strokeWidth="1.500" />
            </svg>
            Preview
          </div>
        </div>

        <div className="mt-[3px] h-[52px] bg-[#9db9f0] shrink-0 pt-[1px]">
          <Row1 />
          <Row2 />
        </div>

        <HRuler />

        <div className="h-[475px] flex shrink-0 bg-[#dbe8fb]">
          <div className="w-[773px] flex flex-col shrink-0 overflow-hidden">
            <div className="h-[10px] flex items-end overflow-hidden pl-[31px] gap-[4px] bg-[#dbe8fb] text-[11px] text-[#444] shrink-0">
              <div className="h-[5px] overflow-hidden"><Caret /></div>
              <span className="leading-[16px] h-[16px] shrink-0">Title</span>
            </div>
            <BandLabel text="Header" />
            <HeaderBand />
            <BandLabel text="Group Header[0]: iInvoiceID" />
            <BandLabel text="Group Header[1]: iInvoiceID" />
            <DetailBand />
          </div>
          <div className="w-[470px] bg-[#a3a3a3] shrink-0" />
          <Scrollbar />
        </div>

        <PageTabs />
        <StatusBar />
      </div>

      <div className="h-[1px] mt-[1px] bg-[#2a7fb8] shrink-0" />
      <Taskbar />
    </div>
  );
}
